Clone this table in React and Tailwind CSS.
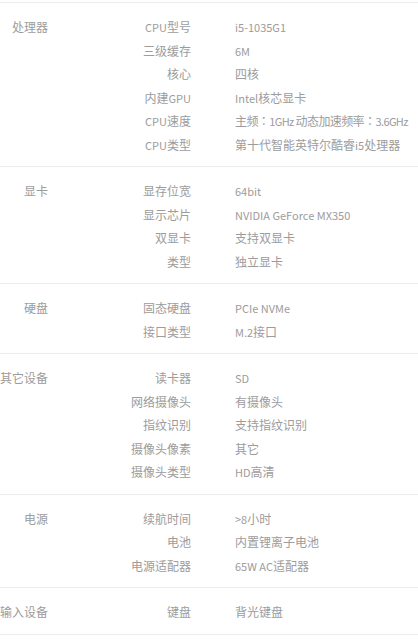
const sections = [
  {
    name: "处理器",
    rows: [
      ["CPU型号", "i5-1035G1"],
      ["三级缓存", "6M"],
      ["核心", "四核"],
      ["内建GPU", "Intel核芯显卡"],
      ["CPU速度", "主频：1GHz 动态加速频率：3.6GHz", true],
      ["CPU类型", "第十代智能英特尔酷睿i5处理器"],
    ],
  },
  {
    name: "显卡",
    rows: [
      ["显存位宽", "64bit"],
      ["显示芯片", "NVIDIA GeForce MX350"],
      ["双显卡", "支持双显卡"],
      ["类型", "独立显卡"],
    ],
  },
  {
    name: "硬盘",
    rows: [
      ["固态硬盘", "PCIe NVMe"],
      ["接口类型", "M.2接口"],
    ],
  },
  {
    name: "其它设备",
    rows: [
      ["读卡器", "SD"],
      ["网络摄像头", "有摄像头"],
      ["指纹识别", "支持指纹识别"],
      ["摄像头像素", "其它"],
      ["摄像头类型", "HD高清"],
    ],
  },
  {
    name: "电源",
    rows: [
      ["续航时间", ">8小时"],
      ["电池", "内置锂离子电池"],
      ["电源适配器", "65W AC适配器"],
    ],
  },
  {
    name: "输入设备",
    rows: [["键盘", "背光键盘"]],
  },
];

// latin runs are set a bit smaller so they sit as narrow as the original's
function Mixed({ text }) {
  const parts = text.split(/([\x20-\x7E]+|：)/).filter(Boolean);
  return parts.map((p, i) => {
    if (p === "：")
      return (
        <span key={i} style={{ fontFamily: '"Noto Sans CJK TC", sans-serif' }}>
          {p}
        </span>
      );
    if (/^[\x20-\x7E]+$/.test(p))
      return (
        <span key={i} className="text-[11px]">
          {p}
        </span>
      );
    return <span key={i}>{p}</span>;
  });
}

export default function App() {
  return (
    <div
      className="w-[418px] bg-white pt-[2px] text-[12px] text-[#9c9c9c]"
      style={{ fontFamily: '"Noto Sans CJK SC", "Liberation Sans", sans-serif' }}
    >
      {sections.map((section) => (
        <div
          key={section.name}
          className="flex border-t border-[#ececec] pt-[12px] pb-[10px] last:border-b"
        >
          {/* Category */}
          <div className="w-[48px] shrink-0 text-right leading-[23.5px] whitespace-nowrap">
            {section.name}
          </div>

          {/* Spec rows */}
          <div className="flex-1">
            {section.rows.map(([label, value, tight]) => (
              <div key={label} className="flex h-[23.5px] leading-[23.5px]">
                <div className="w-[143px] shrink-0 text-right whitespace-nowrap">
                  <Mixed text={label} />
                </div>
                <div
                  className={
                    tight
                      ? "pl-[44px] whitespace-nowrap tracking-[-0.6px]"
                      : "pl-[44px] whitespace-nowrap"
                  }
                >
                  <Mixed text={value} />
                </div>
              </div>
            ))}
          </div>
        </div>
      ))}
    </div>
  );
}
